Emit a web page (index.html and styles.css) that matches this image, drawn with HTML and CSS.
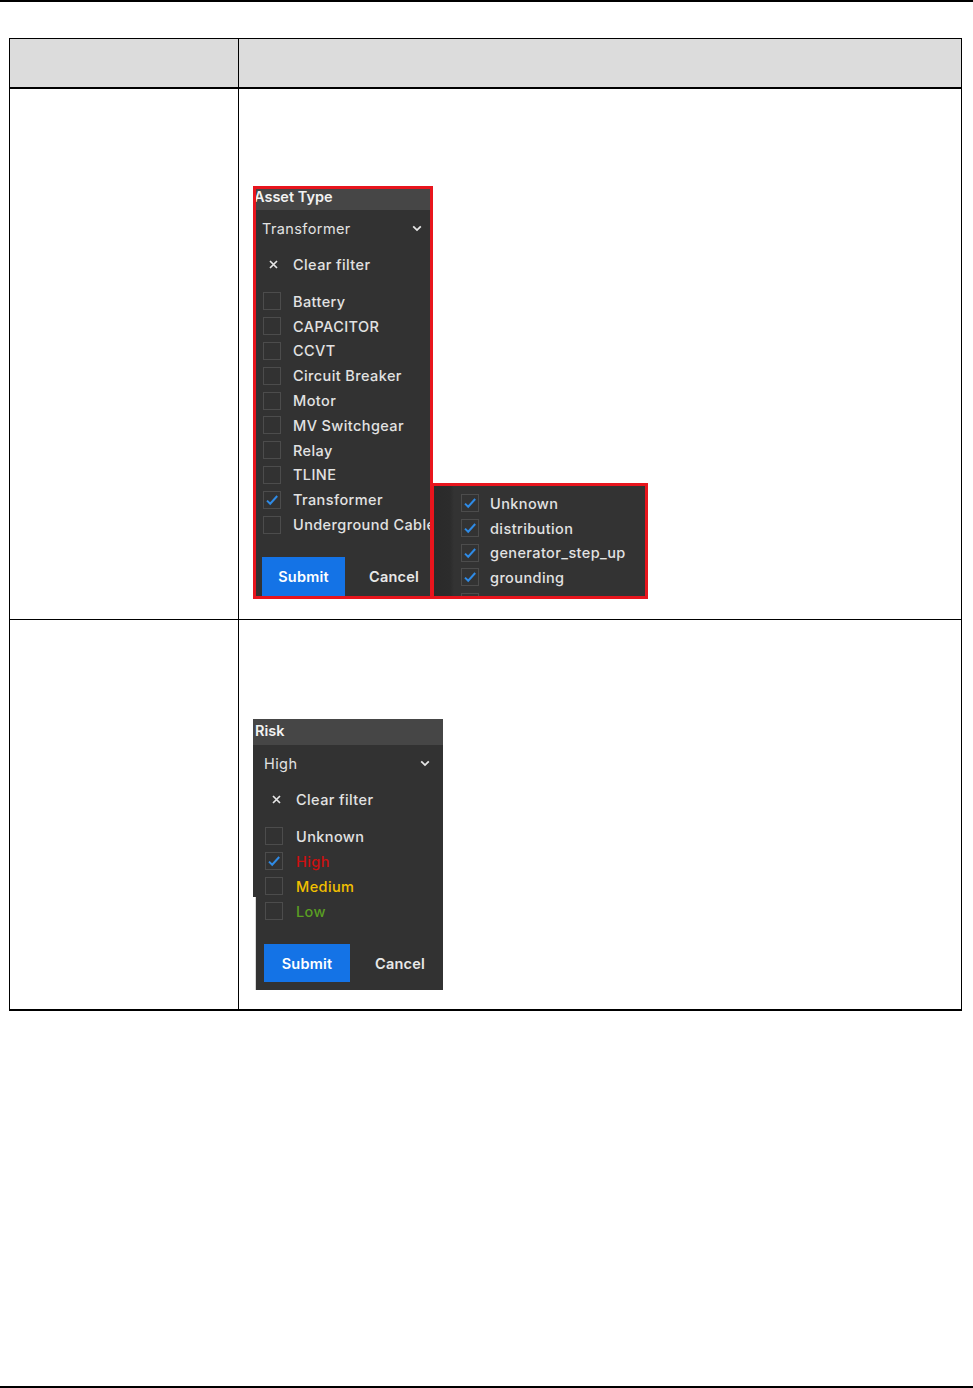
FILE: index.html
```html
<!DOCTYPE html>
<html lang="en">

<head>
    <meta charset="UTF-8">
    <meta name="viewport" content="width=device-width, initial-scale=1.0">
    <title>Filter Reference</title>
    <link rel="stylesheet" href="styles.css">
</head>

<body>
    <div class="sheet">
        <div class="rule"></div>

        <table class="doc-table">
            <tr class="head-row">
                <th class="col-name"></th>
                <th class="col-desc"></th>
            </tr>

            <!-- Asset type filter -->
            <tr class="row-asset">
                <td></td>
                <td>
                    <div class="shot-group">
                        <div class="filter framed asset">
                            <div class="filter-title">Asset Type</div>
                            <div class="filter-select">
                                <span>Transformer</span>
                                <svg class="chevron" width="10" height="7" viewBox="0 0 10 7"><path d="M1.2 1.3L5 5.1l3.8-3.8" fill="none" stroke="#e6e6e6" stroke-width="1.8"/></svg>
                            </div>
                            <div class="filter-clear">
                                <svg class="cross" width="9" height="9" viewBox="0 0 9 9"><path d="M1 1l7 7M8 1L1 8" stroke="#e6e6e6" stroke-width="1.7"/></svg>
                                <span>Clear filter</span>
                            </div>
                            <ul class="filter-options">
                                <li><span class="box"></span>Battery</li>
                                <li><span class="box"></span>CAPACITOR</li>
                                <li><span class="box"></span>CCVT</li>
                                <li><span class="box"></span>Circuit Breaker</li>
                                <li><span class="box"></span>Motor</li>
                                <li><span class="box"></span>MV Switchgear</li>
                                <li><span class="box"></span>Relay</li>
                                <li><span class="box"></span>TLINE</li>
                                <li><span class="box checked"><svg width="16" height="16" viewBox="0 0 16 16"><path d="M3 8.6l3.2 3.1L13.2 4" fill="none" stroke="#2f8be6" stroke-width="2"/></svg></span>Transformer</li>
                                <li><span class="box"></span>Underground Cable</li>
                            </ul>
                            <div class="filter-actions">
                                <button class="btn-submit">Submit</button>
                                <button class="btn-cancel">Cancel</button>
                            </div>
                        </div>

                        <div class="filter framed subtypes">
                            <ul class="filter-options">
                                <li><span class="box checked"><svg width="16" height="16" viewBox="0 0 16 16"><path d="M3 8.6l3.2 3.1L13.2 4" fill="none" stroke="#2f8be6" stroke-width="2"/></svg></span>Unknown</li>
                                <li><span class="box checked"><svg width="16" height="16" viewBox="0 0 16 16"><path d="M3 8.6l3.2 3.1L13.2 4" fill="none" stroke="#2f8be6" stroke-width="2"/></svg></span>distribution</li>
                                <li><span class="box checked"><svg width="16" height="16" viewBox="0 0 16 16"><path d="M3 8.6l3.2 3.1L13.2 4" fill="none" stroke="#2f8be6" stroke-width="2"/></svg></span>generator_step_up</li>
                                <li><span class="box checked"><svg width="16" height="16" viewBox="0 0 16 16"><path d="M3 8.6l3.2 3.1L13.2 4" fill="none" stroke="#2f8be6" stroke-width="2"/></svg></span>grounding</li>
                                <li><span class="box"></span></li>
                            </ul>
                        </div>
                    </div>
                </td>
            </tr>

            <!-- Risk filter -->
            <tr class="row-risk">
                <td></td>
                <td>
                    <div class="filter risk">
                        <div class="filter-title">Risk</div>
                        <div class="filter-select">
                            <span>High</span>
                            <svg class="chevron" width="10" height="7" viewBox="0 0 10 7"><path d="M1.2 1.3L5 5.1l3.8-3.8" fill="none" stroke="#e6e6e6" stroke-width="1.8"/></svg>
                        </div>
                        <div class="filter-clear">
                            <svg class="cross" width="9" height="9" viewBox="0 0 9 9"><path d="M1 1l7 7M8 1L1 8" stroke="#e6e6e6" stroke-width="1.7"/></svg>
                            <span>Clear filter</span>
                        </div>
                        <ul class="filter-options">
                            <li><span class="box"></span>Unknown</li>
                            <li class="lvl-high"><span class="box checked"><svg width="16" height="16" viewBox="0 0 16 16"><path d="M3 8.6l3.2 3.1L13.2 4" fill="none" stroke="#2f8be6" stroke-width="2"/></svg></span>High</li>
                            <li class="lvl-medium"><span class="box"></span>Medium</li>
                            <li class="lvl-low"><span class="box"></span>Low</li>
                        </ul>
                        <div class="filter-actions">
                            <button class="btn-submit">Submit</button>
                            <button class="btn-cancel">Cancel</button>
                        </div>
                    </div>
                </td>
            </tr>
        </table>

        <div class="rule footer-rule"></div>
    </div>
</body>

</html>
```

FILE: styles.css
```css
body {
    margin: 0;
    padding: 0;
    background-color: #fff;
    font-family: 'Inter', 'Liberation Sans', sans-serif;
}

.sheet {
    height: 1388px;
    display: flex;
    flex-direction: column;
}

.rule {
    height: 2px;
    background-color: #000;
}

.footer-rule {
    margin-top: auto;
}

/* Document table */
.doc-table {
    border-collapse: collapse;
    width: 953px;
    margin: 36px 0 0 9px;
    table-layout: fixed;
}

.doc-table th,
.doc-table td {
    border: 1.5px solid #000;
    padding: 0;
    vertical-align: top;
}

.head-row th {
    background-color: #dcdcdc;
    height: 48px;
    border-bottom: 2px solid #000;
}

.col-name {
    width: 228px;
}

.row-asset td {
    height: 530px;
}

.row-risk td {
    height: 389px;
    border-bottom: 2px solid #000;
}

.shot-group {
    margin: 97px 0 0 14px;
}

.risk {
    margin: 99px 0 0 14px;
}

/* Filter screenshots */
.shot-group {
    display: flex;
    align-items: flex-end;
}

.filter {
    background-color: #323232;
    color: #e2e2e2;
    font-size: 14.5px;
    letter-spacing: 0.4px;
    font-weight: 500;
    overflow: hidden;
    box-sizing: border-box;
}

.framed {
    border: 3px solid #e8151d;
}

.filter-title {
    background-color: #464646;
    color: #f2f2f2;
    font-weight: 600;
    letter-spacing: 0;
    white-space: nowrap;
}

.filter-select {
    display: flex;
    align-items: center;
    justify-content: space-between;
    height: 36px;
    font-weight: 400;
}

.filter-clear {
    display: flex;
    align-items: center;
    height: 36px;
}

.filter-options {
    list-style: none;
    margin: 0;
    padding: 0;
}

.filter-options li {
    display: flex;
    align-items: center;
    white-space: nowrap;
}

.box {
    flex: none;
    width: 18px;
    height: 18px;
    box-sizing: border-box;
    border: 1.5px solid #4c4c4c;
    display: flex;
    align-items: center;
    justify-content: center;
}

.filter-actions {
    display: flex;
    align-items: center;
}

.btn-submit {
    background-color: #1473e6;
    color: #fff;
    border: none;
    font-family: inherit;
    font-size: 14.5px;
    font-weight: 600;
    letter-spacing: 0.2px;
    padding: 0;
    cursor: pointer;
}

.btn-cancel {
    background: none;
    color: #e8e8e8;
    border: none;
    font-family: inherit;
    font-size: 14.5px;
    font-weight: 600;
    letter-spacing: 0.2px;
    padding: 0;
    cursor: pointer;
}

/* Asset type panel */
.asset {
    width: 180px;
    height: 413px;
}

.asset .filter-title {
    height: 21px;
    line-height: 15px;
    margin-left: -2px;
}

.asset .filter-select {
    padding: 0 8px 0 6px;
}

.asset .filter-clear {
    padding-left: 13px;
}

.asset .cross {
    margin-right: 15px;
}

.asset .filter-options {
    padding-top: 7px;
}

.asset .filter-options li {
    height: 24.8px;
    padding-left: 7px;
}

.asset .box {
    margin-right: 12px;
}

.asset .filter-actions {
    margin-top: 20px;
    padding-left: 6px;
}

.asset .btn-submit {
    width: 83px;
    height: 40px;
    margin-right: 24px;
}

/* Subtype list panel */
.subtypes {
    width: 217px;
    height: 116px;
    margin-left: -2px;
    background: linear-gradient(to right, #2a2a2a 0, #2c2c2c 16px, #333 20px, #333 100%);
}

.subtypes .filter-options {
    padding-top: 5px;
}

.subtypes .filter-options li {
    height: 24.7px;
    padding-left: 27px;
}

.subtypes .box {
    margin-right: 11px;
}

/* Risk panel */
.risk {
    position: relative;
    width: 190px;
    height: 271px;
}

/* lower half of the capture sits a little to the right */
.risk::after {
    content: '';
    position: absolute;
    left: 0;
    top: 178px;
    bottom: 0;
    width: 2px;
    background-color: #fff;
    border-right: 1px solid #d8d8d8;
}

.risk .filter-title {
    height: 26px;
    line-height: 24px;
    padding-left: 2px;
}

.risk .filter-select {
    padding: 0 13px 0 11px;
}

.risk .filter-clear {
    padding-left: 19px;
}

.risk .cross {
    margin-right: 15px;
}

.risk .filter-options {
    padding-top: 6.5px;
}

.risk .filter-options li {
    height: 25px;
    padding-left: 12px;
}

.risk .box {
    margin-right: 13px;
}

.risk .filter-actions {
    margin-top: 20.5px;
    padding-left: 11px;
}

.risk .btn-submit {
    width: 86px;
    height: 38px;
    margin-right: 25px;
}

.lvl-high {
    color: #cc1010;
}

.lvl-medium {
    color: #f2c000;
}

.lvl-low {
    color: #5a9e22;
}
```
